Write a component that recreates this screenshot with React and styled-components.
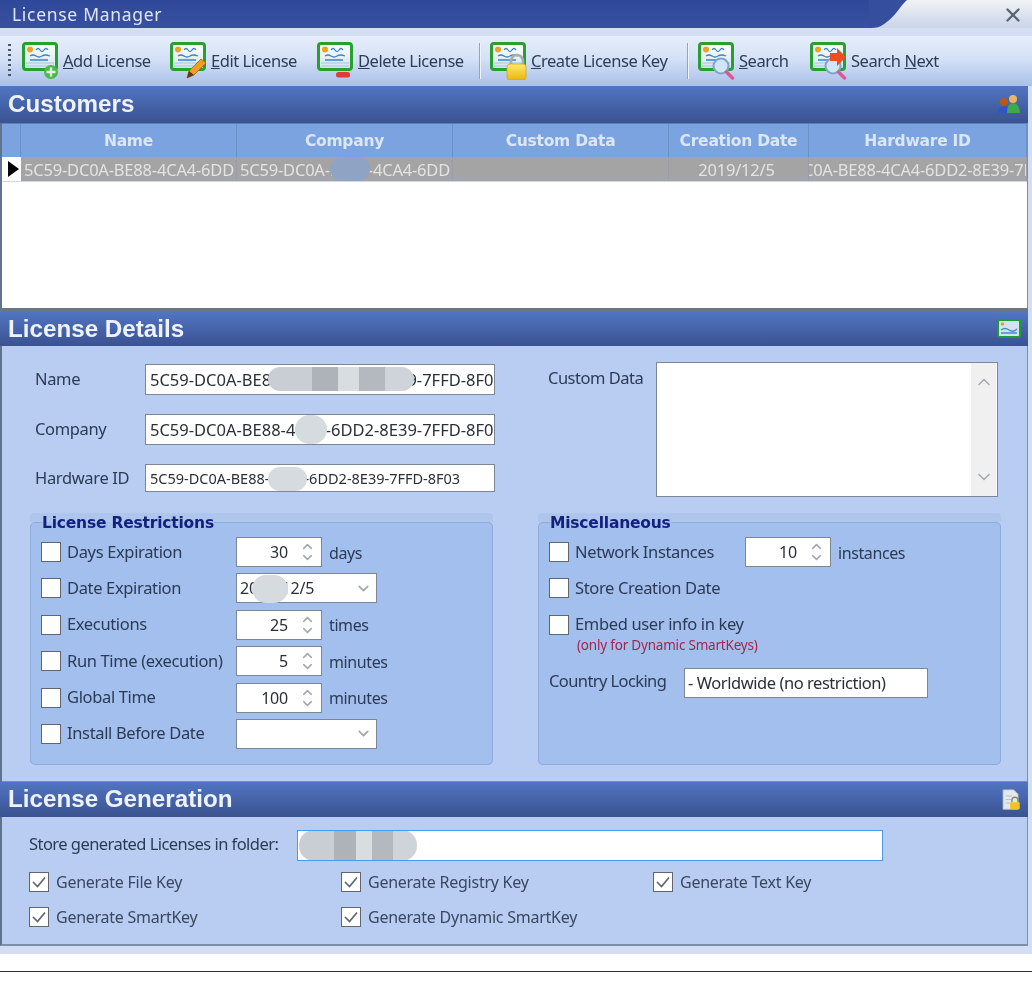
import React from "react";
import styled, { createGlobalStyle } from "styled-components";
import { ChevronUp, ChevronDown, X } from "lucide-react";

const GlobalStyle = createGlobalStyle`
  html, body { margin: 0; padding: 0; background: #fff; }
  * { box-sizing: border-box; }
  body { font-family: "Noto Sans", "Liberation Sans", sans-serif; color: #2c3b55; }
`;

const Window = styled.div`
  width: 1032px;
  height: 954px;
  display: flex;
  flex-direction: column;
  background: #d3def3;
  filter: blur(0.5px);
  overflow: hidden;
`;

const TitleBar = styled.div`
  height: 28px;
  display: flex;
  background: linear-gradient(#f1f2f5, #c9d5ea);
`;

const TitleTab = styled.div`
  width: 869px;
  background: linear-gradient(#2f489a, #38509f);
  color: #dfe6f3;
  font-size: 17.5px;
  line-height: 28px;
  padding-left: 12px;
  letter-spacing: 0.7px;
`;

const TitleCurve = styled.svg`
  width: 38px;
  height: 28px;
  display: block;
`;

const CloseBox = styled.div`
  margin-left: auto;
  width: 36px;
  display: flex;
  align-items: center;
  justify-content: center;
  color: #5b6470;
  padding-top: 2px;
  padding-right: 3px;
`;

const Toolbar = styled.div`
  margin-top: 8px;
  height: 50px;
  display: flex;
  align-items: center;
  padding-left: 8px;
  background: linear-gradient(#e6eefc 0%, #d5e1f6 45%, #a9c0e8 100%);
`;

const Grip = styled.div`
  width: 3px;
  height: 34px;
  margin-right: 11px;
  background: repeating-linear-gradient(#4b5668 0 2px, transparent 2px 5px);
`;

const ToolButton = styled.div`
  display: flex;
  align-items: center;
  width: ${(p) => p.$w}px;
  flex: none;
  font-size: 16.5px;
  letter-spacing: -0.45px;
  color: #2d3d58;
  white-space: nowrap;
  span { margin-left: 4px; padding-bottom: 2px; }
`;

const ToolSep = styled.div`
  width: 1px;
  height: 36px;
  margin-right: 10px;
  background: #8ea5c8;
  box-shadow: 1px 0 0 #eef3fc;
`;

const Content = styled.div`
  flex: 1;
  margin: 0 4px 8px 0;
  display: flex;
  flex-direction: column;
  border-left: 2px solid #5f7390;
  border-right: 1px solid #7d8ea8;
  border-bottom: 2px solid #7d8ea8;
  background: #b9cdf2;
  min-height: 0;
`;

const SectionHead = styled.div`
  height: ${(p) => p.$h}px;
  flex: none;
  display: flex;
  align-items: center;
  justify-content: space-between;
  padding: 0 7px 1px 8px;
  margin-left: -2px;
  margin-right: -1px;
  background: linear-gradient(#5175c2, #3a5290);
  color: #eef2fa;
  font: bold 24.2px "Liberation Sans", sans-serif;
`;

const GridHeader = styled.div`
  display: grid;
  grid-template-columns: ${(p) => p.$cols};
  height: 34px;
  background: #7aa3df;
  border-top: 1px solid #5d7fb8;
`;

const HeadCell = styled.div`
  display: flex;
  align-items: center;
  justify-content: center;
  font: bold 15.5px "DejaVu Sans", sans-serif;
  letter-spacing: -0.25px;
  color: #dbe6f6;
  border-right: 1px solid #6a90c8;
`;

const GridRow = styled.div`
  display: grid;
  grid-template-columns: ${(p) => p.$cols};
  height: 24px;
  background: #a4a4a4;
  position: relative;
`;

const RowMark = styled.div`
  background: #fff;
  display: flex;
  align-items: center;
  padding-left: 6px;
  &::before {
    content: "";
    border-left: 11px solid #000;
    border-top: 8px solid transparent;
    border-bottom: 8px solid transparent;
  }
`;

const Cell = styled.div`
  overflow: hidden;
  white-space: nowrap;
  font-size: 16.5px;
  line-height: 24px;
  padding: ${(p) => (p.$center ? "1px 4px 0 0" : "1px 0 0 3px")};
  color: #e3e3e3;
  letter-spacing: -0.2px;
  text-align: ${(p) => (p.$center ? "center" : "left")};
  text-indent: ${(p) => p.$indent ?? 0}px;
  border-right: 1px solid #9a9da3;
`;

const GridEmpty = styled.div`
  height: 127px;
  background: #fff;
  border-top: 1px solid #cdd9ea;
`;

const PanelGap = styled.div`
  height: 4px;
  flex: none;
  margin: 0 -1px 0 -2px;
  background: #6a7686;
`;

const DetailsBody = styled.div`
  height: 436px;
  flex: none;
  padding: 18px 0 0 28px;
  display: grid;
  grid-template-columns: 463px 463px;
  grid-template-rows: 128px 252px;
  column-gap: 45px;
  row-gap: 21px;
  border-bottom: 1px solid #7d8ea8;
`;

const FieldStack = styled.div`
  display: flex;
  flex-direction: column;
  gap: 19px;
  padding-left: 5px;
`;

const FieldRow = styled.div`
  display: flex;
  align-items: center;
`;

const FieldLabel = styled.div`
  width: ${(p) => p.$w ?? 110}px;
  flex: none;
  padding-bottom: 2px;
  font-size: 16.5px;
  letter-spacing: -0.35px;
  white-space: nowrap;
`;

const TextBox = styled.div`
  position: relative;
  width: ${(p) => p.$w ?? 350}px;
  height: ${(p) => p.$h ?? 31}px;
  flex: none;
  background: #fff;
  border: 1px solid ${(p) => p.$border ?? "#7d8694"};
  font-size: ${(p) => p.$size ?? 16.5}px;
  line-height: ${(p) => (p.$h ?? 31) - 2}px;
  padding-left: 4px;
  white-space: nowrap;
  overflow: hidden;
  color: #2b2f38;
`;

const Smudge = styled.div`
  position: absolute;
  left: ${(p) => p.$x}px;
  top: ${(p) => p.$y}px;
  width: ${(p) => p.$w}px;
  height: ${(p) => p.$h}px;
  border-radius: ${(p) => p.$r ?? 14}px;
  background: ${(p) => p.$bg ?? "#d6dbe0"};
`;

const MemoRow = styled.div`
  display: flex;
  margin-top: -2px;
  padding-left: 10px;
`;

const MemoLabel = styled.div`
  width: 108px;
  padding-top: 4px;
  font-size: 16.5px;
  letter-spacing: -0.5px;
`;

const Memo = styled.div`
  width: 342px;
  height: 135px;
  background: #fff;
  border: 1px solid #7d8694;
  display: flex;
  justify-content: flex-end;
`;

const MemoScroll = styled.div`
  width: 25px;
  margin-right: 1px;
  background: #f0f0f0;
  display: flex;
  flex-direction: column;
  justify-content: space-between;
  align-items: center;
  padding: 9px 0;
  color: #a9adb2;
`;

const GroupWrap = styled.div`
  background: linear-gradient(#aec5ec 0 9px, transparent 9px);
  border-radius: 4px;
`;

const Group = styled.fieldset`
  margin: 0;
  height: 252px;
  border: 1px solid #8fabdc;
  border-radius: 5px;
  background: #a3bfed;
  padding: 6px 10px 0 10px;
  min-width: 0;
  display: flex;
  flex-direction: column;
  gap: 6.4px;
`;

const Legend = styled.legend`
  padding: 2px 0 0;
  margin-left: 1px;
  color: #14207e;
  font: bold 15.5px "DejaVu Sans", sans-serif;
  letter-spacing: -0.2px;
  line-height: 16px;
`;

const OptionRow = styled.div`
  display: flex;
  align-items: center;
  height: 30px;
  flex: none;
`;

const CheckBox = styled.div`
  width: 20px;
  height: 20px;
  flex: none;
  background: #fff;
  border: 1px solid #5f6672;
  display: flex;
  align-items: center;
  justify-content: center;
`;

const OptionLabel = styled.div`
  width: ${(p) => p.$w ?? 175}px;
  padding: 0 0 2px 6px;
  font-size: 16.5px;
  letter-spacing: -0.35px;
  white-space: nowrap;
  flex: none;
  color: #2c3b55;
`;

const SpinBox = styled.div`
  width: 86px;
  height: 30px;
  flex: none;
  background: #fff;
  border: 1px solid #7d8694;
  display: flex;
  align-items: center;
  justify-content: flex-end;
  font-size: 16px;
  letter-spacing: -0.2px;
  color: #2b2f38;
`;

const SpinArrows = styled.div`
  width: 33px;
  padding-left: 6px;
  display: flex;
  flex-direction: column;
  align-items: center;
  color: #a2a7ae;
  svg { display: block; margin: -2px 0; }
`;

const Unit = styled.div`
  margin-left: 7px;
  padding-top: 1px;
  font-size: 16px;
  letter-spacing: -0.4px;
`;

const DropBox = styled(SpinBox)`
  position: relative;
  width: 141px;
  justify-content: space-between;
  padding: 0 4px 0 3px;
`;

const Note = styled.div`
  margin: -10px 0 0 28px;
  font-size: 13.5px;
  letter-spacing: -0.2px;
  color: #a0284c;
  line-height: 18px;
`;

const CountryRow = styled(OptionRow)`
  margin-top: 7px;
`;

const CountryLabel = styled(OptionLabel)`
  width: 135px;
  padding: 0 0 5px 0;
  letter-spacing: -0.6px;
`;

const CountryBox = styled(TextBox)`
  padding-left: 3px;
  letter-spacing: -0.45px;
`;

const GenBody = styled.div`
  flex: 1;
  padding: 13px 0 0 27px;
`;

const StoreRow = styled.div`
  display: flex;
  align-items: center;
  margin-bottom: 11px;
`;

const StoreLabel = styled(FieldLabel)`
  width: 268px;
  padding-bottom: 5px;
  letter-spacing: -0.55px;
`;

const CheckGrid = styled.div`
  display: grid;
  grid-template-columns: repeat(3, 312px);
  row-gap: 15px;
`;

const CheckItem = styled.div`
  display: flex;
  align-items: center;
  height: 20px;
`;

const CheckText = styled.div`
  padding-left: 7px;
  font-size: 16px;
  letter-spacing: -0.25px;
  color: #3a4760;
`;

const BottomRule = styled.div`
  margin-top: 17px;
  height: 1px;
  background: #333;
`;

// little certificate picture shared by all toolbar buttons
const CertIcon = ({ variant }) => (
  <svg width="37" height="38" viewBox="0 0 37 38">
    <defs>
      <linearGradient id="certFill" x1="0" y1="0" x2="0" y2="1">
        <stop offset="0" stopColor="#ffffff" />
        <stop offset="1" stopColor="#cfe3ee" />
      </linearGradient>
      <linearGradient id="lockFill" x1="0" y1="0" x2="0" y2="1">
        <stop offset="0" stopColor="#ffe96e" />
        <stop offset="1" stopColor="#e9b50c" />
      </linearGradient>
    </defs>
    <rect x="1.5" y="1.5" width="33" height="26" rx="2.5" fill="url(#certFill)" stroke="#27a02f" strokeWidth="3" />
    <path d="M4 21h28M4 24h28" stroke="#b6d4e6" strokeWidth="1.5" />
    <circle cx="8" cy="7.5" r="3" fill="#eea21e" />
    <path d="M14 8q2-3 4 0t4 0 4 0M8 14q3-2 6 0t6 0 8 0M8 18h18" fill="none" stroke="#3d84c8" strokeWidth="1.3" />
    {variant === "add" && (
      <g>
        <circle cx="29" cy="30" r="7" fill="#4db84e" />
        <path d="M29 25.5v9M24.5 30h9" stroke="#dff5d8" strokeWidth="2.4" />
      </g>
    )}
    {variant === "edit" && (
      <g>
        <path d="M17 36l2-7L31 17l5 4-12 12z" fill="#f0a020" stroke="#a86010" strokeWidth="0.8" />
        <path d="M17 36l2-7 5 4z" fill="#5a3a18" />
      </g>
    )}
    {variant === "delete" && <rect x="19" y="30" width="14" height="5.5" rx="2.5" fill="#e23a36" />}
    {variant === "key" && (
      <g>
        <path d="M21 24v-5a6 6 0 0 1 12 0v5" fill="none" stroke="#a9adb2" strokeWidth="2.6" />
        <rect x="17" y="22" width="19" height="16" rx="3" fill="url(#lockFill)" stroke="#d9a80e" strokeWidth="0.8" />
      </g>
    )}
    {(variant === "search" || variant === "next") && (
      <g>
        <circle cx="23" cy="24" r="7.5" fill="#cfe6f7" stroke="#7fa6c8" strokeWidth="2" />
        <path d="M28.5 30l6 6" stroke="#e0559a" strokeWidth="3.4" strokeLinecap="round" />
      </g>
    )}
    {variant === "next" && <path d="M20 11h7V6l9 9-9 9v-5h-7z" fill="#ef4a2a" />}
  </svg>
);

const UsersIcon = () => (
  <svg width="24" height="22" viewBox="0 0 24 22">
    <circle cx="7" cy="9" r="4" fill="#b8571c" />
    <path d="M1 20q1-7 6-7t6 7z" fill="#2f55c8" />
    <circle cx="16" cy="6" r="4" fill="#efb463" />
    <path d="M10 20q0-10 6-10t7 10z" fill="#3fa84a" />
  </svg>
);

const SmallCertIcon = () => (
  <svg width="24" height="20" viewBox="0 0 24 20">
    <rect x="1" y="1" width="22" height="17" rx="1.5" fill="#cfe6f2" stroke="#1f9a35" strokeWidth="2" />
    <circle cx="5.5" cy="5" r="1.8" fill="#ee9a22" />
    <path d="M4 11q4-3 8 0t8-1M4 14h16" fill="none" stroke="#4a8ac8" strokeWidth="1.4" />
  </svg>
);

const DocLockIcon = () => (
  <svg width="20" height="21" viewBox="0 0 22 24">
    <path d="M2 1h12l5 5v17H2z" fill="#e4e7ec" stroke="#c3c8d2" />
    <path d="M5 8h7M5 12h6M5 16h5" stroke="#b9bec8" strokeWidth="1.4" />
    <path d="M12 15v-2a3.5 3.5 0 0 1 7 0v2" fill="none" stroke="#8d8a70" strokeWidth="1.6" />
    <rect x="10" y="15" width="11" height="8" rx="1" fill="#f2c518" />
  </svg>
);

const CheckMark = () => (
  <svg width="16" height="14" viewBox="0 0 16 14">
    <path d="M2 7l4.5 4.5L14 2.5" fill="none" stroke="#5f6672" strokeWidth="1.7" />
  </svg>
);

const Spin = ({ value }) => (
  <SpinBox>
    {value}
    <SpinArrows>
      <ChevronUp size={15} strokeWidth={2.4} />
      <ChevronDown size={15} strokeWidth={2.4} />
    </SpinArrows>
  </SpinBox>
);

const Option = ({ label, children, labelWidth }) => (
  <OptionRow>
    <CheckBox />
    <OptionLabel $w={labelWidth}>{label}</OptionLabel>
    {children}
  </OptionRow>
);

const GenCheck = ({ label }) => (
  <CheckItem>
    <CheckBox>
      <CheckMark />
    </CheckBox>
    <CheckText>{label}</CheckText>
  </CheckItem>
);

const cols = "19px 216px 216px 216px 140px 218px";
const licenseId = "5C59-DC0A-BE88-4CA4-6DD2-8E39-7FFD-8F03";
const pixelBlur =
  "linear-gradient(90deg,#c9ced4 0 30%,#aeb3b9 30% 48%,#d8dde2 48% 62%,#b4b9bf 62% 80%,#cfd4da 80%)";

const App = () => {
  return (
    <>
      <GlobalStyle />
      <Window>
        <TitleBar>
          <TitleTab>License Manager</TitleTab>
          <TitleCurve viewBox="0 0 38 28">
            <path d="M0 0H38C31 6 25 19 12 26C8 28 3 28 0 28Z" fill="#364e9e" />
          </TitleCurve>
          <CloseBox>
            <X size={22} strokeWidth={2.6} />
          </CloseBox>
        </TitleBar>

        <Toolbar>
          <Grip />
          <ToolButton $w={148}>
            <CertIcon variant="add" />
            <span><u>A</u>dd License</span>
          </ToolButton>
          <ToolButton $w={147}>
            <CertIcon variant="edit" />
            <span><u>E</u>dit License</span>
          </ToolButton>
          <ToolButton $w={162}>
            <CertIcon variant="delete" />
            <span><u>D</u>elete License</span>
          </ToolButton>
          <ToolSep />
          <ToolButton $w={197}>
            <CertIcon variant="key" />
            <span><u>C</u>reate License Key</span>
          </ToolButton>
          <ToolSep />
          <ToolButton $w={112}>
            <CertIcon variant="search" />
            <span><u>S</u>earch</span>
          </ToolButton>
          <ToolButton $w={132}>
            <CertIcon variant="next" />
            <span>Search <u>N</u>ext</span>
          </ToolButton>
        </Toolbar>

        <Content>
          <SectionHead $h={37}>
            Customers
            <UsersIcon />
          </SectionHead>
          <GridHeader $cols={cols}>
            <HeadCell />
            <HeadCell>Name</HeadCell>
            <HeadCell>Company</HeadCell>
            <HeadCell>Custom Data</HeadCell>
            <HeadCell>Creation Date</HeadCell>
            <HeadCell>Hardware ID</HeadCell>
          </GridHeader>
          <GridRow $cols={cols}>
            <RowMark />
            <Cell>5C59-DC0A-BE88-4CA4-6DD</Cell>
            <Cell>5C59-DC0A-BE88-4CA4-6DD</Cell>
            <Cell />
            <Cell $center>2019/12/5</Cell>
            <Cell $indent={-64}>{licenseId}</Cell>
            <Smudge $x={328} $y={0} $w={40} $h={24} $bg="#8fa3c4" />
          </GridRow>
          <GridEmpty />
          <PanelGap />

          <SectionHead $h={34}>
            License Details
            <SmallCertIcon />
          </SectionHead>
          <DetailsBody>
            <FieldStack>
              <FieldRow>
                <FieldLabel>Name</FieldLabel>
                <TextBox>
                  {licenseId}
                  <Smudge $x={122} $y={2} $w={146} $h={24} $bg={pixelBlur} />
                </TextBox>
              </FieldRow>
              <FieldRow>
                <FieldLabel>Company</FieldLabel>
                <TextBox>
                  {licenseId}
                  <Smudge $x={149} $y={0} $w={32} $h={29} $r={16} />
                </TextBox>
              </FieldRow>
              <FieldRow>
                <FieldLabel>Hardware ID</FieldLabel>
                <TextBox $h={28} $size={14.5}>
                  {licenseId}
                  <Smudge $x={122} $y={2} $w={39} $h={24} $r={14} />
                </TextBox>
              </FieldRow>
            </FieldStack>

            <MemoRow>
              <MemoLabel>Custom Data</MemoLabel>
              <Memo>
                <MemoScroll>
                  <ChevronUp size={20} />
                  <ChevronDown size={20} />
                </MemoScroll>
              </Memo>
            </MemoRow>

            <GroupWrap>
              <Group>
                <Legend>License Restrictions</Legend>
                <Option label="Days Expiration">
                  <Spin value="30" />
                  <Unit>days</Unit>
                </Option>
                <Option label="Date Expiration">
                  <DropBox>
                    2019/12/5
                    <ChevronDown size={17} strokeWidth={2.4} color="#a2a7ae" />
                    <Smudge $x={15} $y={1} $w={36} $h={28} $r={14} />
                  </DropBox>
                </Option>
                <Option label="Executions">
                  <Spin value="25" />
                  <Unit>times</Unit>
                </Option>
                <Option label="Run Time (execution)">
                  <Spin value="5" />
                  <Unit>minutes</Unit>
                </Option>
                <Option label="Global Time">
                  <Spin value="100" />
                  <Unit>minutes</Unit>
                </Option>
                <Option label="Install Before Date">
                  <DropBox>
                    &nbsp;
                    <ChevronDown size={17} strokeWidth={2.4} color="#a2a7ae" />
                  </DropBox>
                </Option>
              </Group>
            </GroupWrap>

            <GroupWrap>
              <Group>
                <Legend>Miscellaneous</Legend>
                <Option label="Network Instances" labelWidth={176}>
                  <Spin value="10" />
                  <Unit>instances</Unit>
                </Option>
                <Option label="Store Creation Date" labelWidth={176} />
                <Option label="Embed user info in key" labelWidth={220} />
                <Note>(only for Dynamic SmartKeys)</Note>
                <CountryRow>
                  <CountryLabel>Country Locking</CountryLabel>
                  <CountryBox $w={244} $h={30}>- Worldwide (no restriction)</CountryBox>
                </CountryRow>
              </Group>
            </GroupWrap>
          </DetailsBody>

          <SectionHead $h={35}>
            License Generation
            <DocLockIcon />
          </SectionHead>
          <GenBody>
            <StoreRow>
              <StoreLabel>Store generated Licenses in folder:</StoreLabel>
              <TextBox $w={586} $border="#4d9be0">
                <Smudge $x={1} $y={-1} $w={118} $h={31} $r={15} $bg={pixelBlur} />
              </TextBox>
            </StoreRow>
            <CheckGrid>
              <GenCheck label="Generate File Key" />
              <GenCheck label="Generate Registry Key" />
              <GenCheck label="Generate Text Key" />
              <GenCheck label="Generate SmartKey" />
              <GenCheck label="Generate Dynamic SmartKey" />
            </CheckGrid>
          </GenBody>
        </Content>
      </Window>
      <BottomRule />
    </>
  );
};

export default App;
